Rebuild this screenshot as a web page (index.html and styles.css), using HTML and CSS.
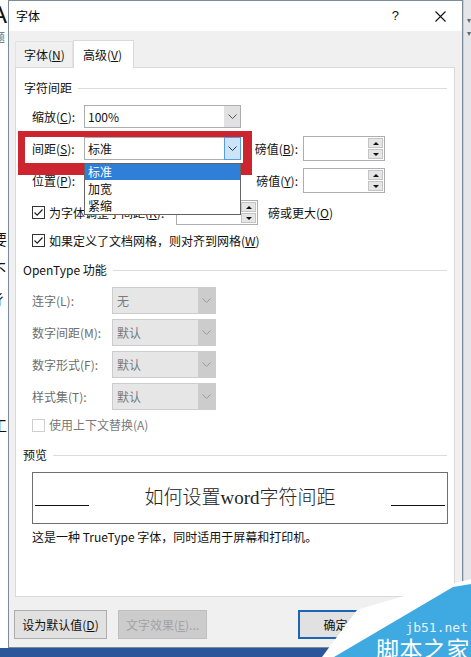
FILE: index.html
```html
<!DOCTYPE html>
<html lang="zh-CN">
<head>
<meta charset="utf-8">
<title>字体</title>
<link rel="stylesheet" href="styles.css">
</head>
<body>
<div class="desk">
  <div class="main">
    <div class="doc-left">
      <span class="g g-a">A</span>
      <span class="g g-ti">题</span>
      <span class="g g-yao">要</span>
      <span class="g g-bu">不</span>
      <span class="g g-chi">彳</span>
      <span class="g g-gong">工</span>
    </div>

    <div class="dialog">
      <div class="titlebar">
        <span class="title">字体</span>
        <span class="help">?</span>
        <svg class="close" width="11" height="11" viewBox="0 0 11 11"><path d="M0.5 0.5 L10.5 10.5 M10.5 0.5 L0.5 10.5" stroke="#111" stroke-width="1.1" fill="none"/></svg>
      </div>

      <div class="tabs">
        <div class="tab">字体(<u>N</u>)</div>
        <div class="tab active">高级(<u>V</u>)</div>
      </div>

      <div class="panel">
        <div class="sec-h sec-first"><span>字符间距</span><i class="rule"></i></div>

        <div class="rows">
          <div class="row">
            <span class="lbl">缩放(<u>C</u>):</span>
            <div class="select"><span class="val">100%</span><span class="arrow"><svg width="9" height="5" viewBox="0 0 9 5"><polyline points="0.5,0.5 4.5,4.5 8.5,0.5" fill="none" stroke="#555" stroke-width="1"/></svg></span></div>
          </div>

          <div class="row">
            <span class="lbl">间距(<u>S</u>):</span>
            <div class="select"><span class="val">标准</span><span class="arrow focus"><svg width="9" height="5" viewBox="0 0 9 5"><polyline points="0.5,0.5 4.5,4.5 8.5,0.5" fill="none" stroke="#333" stroke-width="1"/></svg></span></div>
            <span class="lbl2">磅值(<u>B</u>):</span>
            <div class="spin">
              <span class="spin-btns"><span class="sb"><i class="tri-up"></i></span><span class="sb"><i class="tri-down"></i></span></span>
            </div>
          </div>

          <div class="row">
            <span class="lbl">位置(<u>P</u>):</span>
            <div class="select"><span class="val">标准</span><span class="arrow"><svg width="9" height="5" viewBox="0 0 9 5"><polyline points="0.5,0.5 4.5,4.5 8.5,0.5" fill="none" stroke="#555" stroke-width="1"/></svg></span></div>
            <span class="lbl2">磅值(<u>Y</u>):</span>
            <div class="spin">
              <span class="spin-btns"><span class="sb"><i class="tri-up"></i></span><span class="sb"><i class="tri-down"></i></span></span>
            </div>
          </div>

          <div class="row">
            <label class="chk-group kern">
              <span class="cb"><svg width="11" height="11" viewBox="0 0 11 11"><polyline points="1.5,5.5 4.2,8.2 9.5,2.5" fill="none" stroke="#222" stroke-width="1.2"/></svg></span>
              <span>为字体调整字间距(<u>K</u>):</span>
            </label>
            <div class="spin">
              <span class="spin-btns"><span class="sb"><i class="tri-up"></i></span><span class="sb"><i class="tri-down"></i></span></span>
            </div>
            <span class="after-spin">磅或更大(<u>O</u>)</span>
          </div>

          <div class="row row-short">
            <label class="chk-group">
              <span class="cb"><svg width="11" height="11" viewBox="0 0 11 11"><polyline points="1.5,5.5 4.2,8.2 9.5,2.5" fill="none" stroke="#222" stroke-width="1.2"/></svg></span>
              <span>如果定义了文档网格，则对齐到网格(<u>W</u>)</span>
            </label>
          </div>
        </div>

        <div class="sec-h sec-ot"><span>OpenType 功能</span><i class="rule"></i></div>

        <div class="ot-rows">
          <div class="ot-row">
            <span class="ot-lbl">连字(L):</span>
            <div class="dsel"><span class="val">无</span><span class="arrow"><svg width="9" height="5" viewBox="0 0 9 5"><polyline points="0.5,0.5 4.5,4.5 8.5,0.5" fill="none" stroke="#9a9a9a" stroke-width="1"/></svg></span></div>
          </div>
          <div class="ot-row">
            <span class="ot-lbl">数字间距(M):</span>
            <div class="dsel"><span class="val">默认</span><span class="arrow"><svg width="9" height="5" viewBox="0 0 9 5"><polyline points="0.5,0.5 4.5,4.5 8.5,0.5" fill="none" stroke="#9a9a9a" stroke-width="1"/></svg></span></div>
          </div>
          <div class="ot-row">
            <span class="ot-lbl">数字形式(F):</span>
            <div class="dsel"><span class="val">默认</span><span class="arrow"><svg width="9" height="5" viewBox="0 0 9 5"><polyline points="0.5,0.5 4.5,4.5 8.5,0.5" fill="none" stroke="#9a9a9a" stroke-width="1"/></svg></span></div>
          </div>
          <div class="ot-row">
            <span class="ot-lbl">样式集(T):</span>
            <div class="dsel"><span class="val">默认</span><span class="arrow"><svg width="9" height="5" viewBox="0 0 9 5"><polyline points="0.5,0.5 4.5,4.5 8.5,0.5" fill="none" stroke="#9a9a9a" stroke-width="1"/></svg></span></div>
          </div>
        </div>

        <div class="row-dis">
          <span class="cb cb-dis"></span>
          <span>使用上下文替换(A)</span>
        </div>

        <div class="sec-h sec-pv"><span>预览</span><i class="rule"></i></div>

        <div class="preview">
          <i class="pv-line"></i>
          <span class="pv-text">如何设置word字符间距</span>
          <i class="pv-line"></i>
        </div>

        <div class="caption">这是一种 TrueType 字体，同时适用于屏幕和打印机。</div>
      </div>

      <div class="buttons">
        <button class="btn b-default">设为默认值(<u>D</u>)</button>
        <button class="btn b-effects" disabled>文字效果(<u>E</u>)...</button>
        <button class="btn b-ok">确定</button>
        <button class="btn b-cancel">取消</button>
      </div>
    </div>

    <div class="doc-right">
      <span class="rib">&#9662;</span>
      <span class="rib">&#9662;</span>
    </div>
  </div>
  <div class="statusbar"></div>

  <div class="redbox"></div>

  <div class="droplist">
    <div class="dl-item sel">标准</div>
    <div class="dl-item">加宽</div>
    <div class="dl-item">紧缩</div>
  </div>

  <div class="watermark">
    <svg class="wm-shape" width="151" height="82" viewBox="0 0 151 82">
      <polygon points="2,82 37,35 80,22 151,4 151,82" fill="#ffffff"/>
      <polygon points="14,82 133,12 151,9 151,82" fill="#3fa9e2"/>
    </svg>
    <div class="wm-text">
      <span class="wm-url">jb51.net</span>
      <span class="wm-name">脚本之家</span>
    </div>
  </div>
</div>
</body>
</html>
```

FILE: styles.css
```css
* { box-sizing: border-box; margin: 0; padding: 0; }
html, body { width: 471px; height: 657px; overflow: hidden; }
body {
  font-family: "Noto Sans CJK SC", "Microsoft YaHei", sans-serif;
  font-size: 12px;
  color: #111;
  background: #fff;
}
u { text-decoration: underline; text-underline-offset: 1px; }

.desk {
  position: relative;
  width: 471px;
  height: 657px;
  display: flex;
  flex-direction: column;
  overflow: hidden;
}
.main { display: flex; height: 648px; }
.statusbar { height: 9px; background: #2b579a; }

/* background document strips */
.doc-left {
  width: 8px;
  background: #fff;
  overflow: hidden;
  display: flex;
  flex-direction: column;
  align-items: flex-start;
}
.g { display: block; color: #111; white-space: nowrap; }
.g-a { font-family: "Liberation Sans", sans-serif; font-size: 24px; line-height: 24px; margin: 3px 0 0 -9px; }
.g-ti { font-size: 11px; line-height: 12px; color: #666; margin: 4px 0 0 -6px; }
.g-yao { font-size: 15px; line-height: 16px; margin: 188px 0 0 -8px; }
.g-bu { font-size: 15px; line-height: 16px; margin: 14px 0 0 -9px; }
.g-chi { font-size: 15px; line-height: 16px; margin: 14px 0 0 -8px; }
.g-gong { font-size: 15px; line-height: 16px; margin: 110px 0 0 -8px; }

.doc-right {
  width: 8px;
  background: #e4e6e9;
  border-left: 1px solid #c9cdd2;
  display: flex;
  flex-direction: column;
  align-items: flex-end;
  padding-top: 14px;
  gap: 2px;
}
.rib { font-size: 8px; line-height: 11px; color: #666; }

/* dialog */
.dialog {
  width: 455px;
  border: 1px solid #7d8a98;
  background: #f0f0f0;
  display: flex;
  flex-direction: column;
}
.titlebar {
  height: 30px;
  background: #fff;
  display: flex;
  align-items: center;
  padding-left: 7px;
}
.title { font-size: 12px; line-height: 16px; color: #000; }
.help { margin-left: auto; font-family: "Liberation Sans", sans-serif; font-size: 13px; line-height: 16px; color: #111; }
.close { margin-left: 36px; margin-right: 16px; display: block; }

.tabs {
  display: flex;
  align-items: flex-end;
  height: 28px;
  margin-top: 9px;
  margin-left: 6px;
}
.tab {
  height: 27px;
  width: 58px;
  padding-left: 8px;
  display: flex;
  align-items: center;
  white-space: nowrap;
  border: 1px solid #e3e3e3;
  border-bottom: none;
  background: #f0f0f0;
  line-height: 16px;
}
.tab.active {
  position: relative;
  z-index: 1;
  height: 28px;
  width: 61px;
  padding-left: 9px;
  background: #fff;
  border-color: #d9d9d9;
}

.panel {
  margin-top: -1px;
  margin-left: 6px;
  width: 440px;
  height: 530px;
  background: #fff;
  border: 1px solid #d9d9d9;
  display: flex;
  flex-direction: column;
  flex-shrink: 0;
}

.sec-h {
  height: 16px;
  display: flex;
  align-items: center;
  padding-left: 8px;
  line-height: 16px;
  color: #111;
}
.sec-h .rule { flex: 1; height: 1px; background: #dcdcdc; margin: 0 7px 0 6px; }
.sec-first { margin-top: 12px; }
.sec-ot { margin-top: 13px; padding-left: 7px; }
.sec-pv { margin-top: 14px; padding-left: 7px; }

.rows { margin-top: 8px; display: flex; flex-direction: column; gap: 7px; }
.row { height: 25px; display: flex; align-items: center; padding-left: 16px; line-height: 16px; }
.row-short { height: 17px; }
.lbl { width: 52px; }
.lbl2 { width: 57px; text-align: right; margin-right: 5px; }

.select {
  width: 157px;
  height: 23px;
  border: 1px solid #abadb3;
  background: #fff;
  display: flex;
}
.select .val { flex: 1; padding-left: 3px; display: flex; align-items: center; }
.select .arrow {
  width: 16px;
  background: #e1e1e1;
  display: flex;
  align-items: center;
  justify-content: center;
}
.select .arrow.focus { background: #cce4f7; border: 1px solid #569de5; margin: -1px -1px -1px 0; width: 17px; }
.select svg, .dsel svg { display: block; }

.spin {
  width: 82px;
  height: 25px;
  border: 1px solid #abadb3;
  background: #fff;
  display: flex;
  justify-content: flex-end;
  align-items: center;
  padding-right: 1px;
}
.spin-btns { display: flex; flex-direction: column; gap: 1px; }
.sb {
  width: 15px;
  height: 10px;
  background: #e5e5e5;
  border: 1px solid #c4c4c4;
  display: flex;
  align-items: center;
  justify-content: center;
}
.tri-up { width: 0; height: 0; border-left: 3px solid transparent; border-right: 3px solid transparent; border-bottom: 3px solid #111; }
.tri-down { width: 0; height: 0; border-left: 3px solid transparent; border-right: 3px solid transparent; border-top: 3px solid #111; }

.chk-group { display: flex; align-items: center; gap: 4px; white-space: nowrap; }
.chk-group.kern { width: 144px; overflow: hidden; }
.cb {
  width: 13px;
  height: 13px;
  border: 1px solid #333;
  background: #fff;
  display: flex;
  align-items: center;
  justify-content: center;
  flex-shrink: 0;
}
.cb svg { display: block; }
.after-spin { margin-left: 10px; }

.ot-rows { margin-top: 9px; display: flex; flex-direction: column; gap: 5px; }
.ot-row { height: 27px; display: flex; align-items: center; padding-left: 16px; line-height: 16px; }
.ot-lbl { width: 80px; color: #6d6d6d; }
.dsel {
  width: 104px;
  height: 27px;
  border: 1px solid #cccccc;
  background: #e6e6e6;
  display: flex;
  color: #7a7a7a;
}
.dsel .val { flex: 1; padding-left: 4px; display: flex; align-items: center; }
.dsel .arrow {
  width: 17px;
  background: #cccccc;
  display: flex;
  align-items: center;
  justify-content: center;
}

.row-dis {
  margin-top: 7px;
  height: 16px;
  display: flex;
  align-items: center;
  gap: 4px;
  padding-left: 16px;
  line-height: 16px;
  color: #7a7a7a;
}
.cb-dis { border-color: #cfcfcf; background: #fff; }

.preview {
  margin: 9px 0 0 16px;
  width: 416px;
  height: 52px;
  border: 1px solid #6e6e6e;
  display: flex;
  align-items: center;
  padding: 0 2px;
}
.pv-line { width: 54px; height: 1px; background: #111; margin-top: 14px; }
.pv-text {
  flex: 1;
  text-align: center;
  font-family: "Liberation Serif", "Noto Sans CJK SC", serif;
  font-size: 19px;
  line-height: 24px;
  color: #222;
  font-weight: 300;
}
.caption { margin-top: 5px; padding-left: 16px; line-height: 16px; height: 16px; }

.buttons { margin-top: 13px; display: flex; height: 29px; padding-left: 5px; }
.btn {
  font-family: "Noto Sans CJK SC", "Microsoft YaHei", sans-serif;
  font-size: 12px;
  line-height: 16px;
  color: #111;
  background: #e1e1e1;
  border: 1px solid #adadad;
  height: 29px;
  white-space: nowrap;
}
.b-default { width: 93px; }
.b-effects { width: 89px; margin-left: 11px; background: #cccccc; border-color: #bfbfbf; color: #a3a3a3; }
.b-ok { width: 75px; margin-left: 91px; border: 2px solid #1c64b4; }
.b-cancel { width: 75px; margin-left: 7px; }

/* annotation overlays */
.redbox {
  position: absolute;
  left: 18px;
  top: 131px;
  width: 234px;
  height: 44px;
  border-style: solid;
  border-color: #cd2530;
  border-width: 6px 9px 12px 7px;
}
.droplist {
  position: absolute;
  left: 84px;
  top: 163px;
  width: 157px;
  height: 52px;
  background: #fff;
  border: 1px solid #646464;
  line-height: 16px;
}
.dl-item { height: 17px; padding-left: 3px; display: flex; align-items: center; }
.dl-item.sel { background: #2f7fd8; color: #fff; height: 16px; }

.watermark {
  position: absolute;
  right: 0;
  bottom: 0;
  width: 151px;
  height: 82px;
}
.wm-shape { position: absolute; left: 0; top: 0; display: block; }
.wm-text {
  position: absolute;
  right: 1px;
  bottom: -4px;
  display: flex;
  flex-direction: column;
  align-items: flex-end;
}
.wm-url {
  font-family: "DejaVu Sans Mono", "Liberation Mono", monospace;
  font-size: 13px;
  line-height: 14px;
  color: #e6f3fb;
  margin-right: 2px;
}
.wm-name {
  font-family: "Noto Sans CJK SC", sans-serif;
  font-size: 23px;
  line-height: 26px;
  color: #fff;
  letter-spacing: 0.5px;
}
```
